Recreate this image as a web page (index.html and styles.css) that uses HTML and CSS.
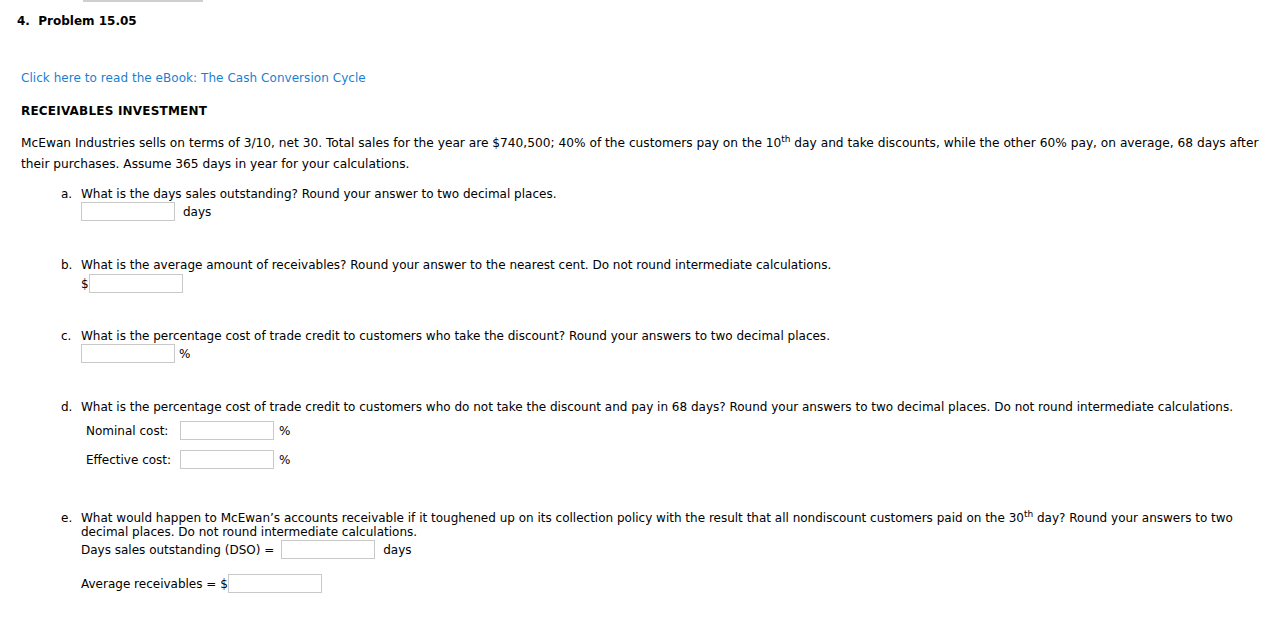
FILE: index.html
```html
<!DOCTYPE html>
<html>
<head>
<meta charset="utf-8">
<link rel="stylesheet" href="styles.css">
</head>
<body>
<div class="topline"></div>
<div class="title">4.&nbsp; Problem 15.05</div>
<div class="content">
  <a class="ebook" href="#">Click here to read the eBook: The Cash Conversion Cycle</a>
  <div class="heading">RECEIVABLES INVESTMENT</div>
  <p class="intro">McEwan Industries sells on terms of 3/10, net 30. Total sales for the year are $740,500; 40% of the customers pay on the 10<sup>th</sup> day and take discounts, while the other 60% pay, on average, 68 days after their purchases. Assume 365 days in year for your calculations.</p>

  <div class="q qa">
    <span class="ql">a.</span>
    <div class="qb">
      <div class="qt">What is the days sales outstanding? Round your answer to two decimal places.</div>
      <div class="ans ans-a"><span class="box"></span><span class="unit u-days">days</span></div>
    </div>
  </div>

  <div class="q qbq">
    <span class="ql">b.</span>
    <div class="qb">
      <div class="qt">What is the average amount of receivables? Round your answer to the nearest cent. Do not round intermediate calculations.</div>
      <div class="ans ans-b"><span class="pre">$</span><span class="box"></span></div>
    </div>
  </div>

  <div class="q qc">
    <span class="ql">c.</span>
    <div class="qb">
      <div class="qt">What is the percentage cost of trade credit to customers who take the discount? Round your answers to two decimal places.</div>
      <div class="ans ans-c"><span class="box"></span><span class="unit u-pct">%</span></div>
    </div>
  </div>

  <div class="q qd">
    <span class="ql">d.</span>
    <div class="qb">
      <div class="qt">What is the percentage cost of trade credit to customers who do not take the discount and pay in 68 days? Round your answers to two decimal places. Do not round intermediate calculations.</div>
      <div class="drow drow1"><span class="dlabel">Nominal cost:</span><span class="box"></span><span class="unit u-pct2">%</span></div>
      <div class="drow drow2"><span class="dlabel">Effective cost:</span><span class="box"></span><span class="unit u-pct2">%</span></div>
    </div>
  </div>

  <div class="q qe">
    <span class="ql">e.</span>
    <div class="qb">
      <div class="qt">What would happen to McEwan’s accounts receivable if it toughened up on its collection policy with the result that all nondiscount customers paid on the 30<sup>th</sup> day? Round your answers to two decimal places. Do not round intermediate calculations.</div>
      <div class="erow erow1"><span class="elabel">Days sales outstanding (DSO) =</span><span class="box"></span><span class="unit u-days2">days</span></div>
      <div class="erow erow2"><span class="elabel">Average receivables = $</span><span class="box"></span></div>
    </div>
  </div>
</div>
</body>
</html>
```
FILE: styles.css
```css
html, body {
  margin: 0;
  padding: 0;
  background: #ffffff;
}
body {
  font-family: "DejaVu Sans", Verdana, sans-serif;
  font-size: 12px;
  color: #000;
  width: 1286px;
  height: 636px;
  overflow: hidden;
}
.topline {
  margin-left: 83px;
  width: 120px;
  height: 2px;
  background: #cfcfcf;
}
.title {
  margin: 12px 0 0 17px;
  font-weight: bold;
  line-height: 14px;
  font-size: 12px;
}
.content {
  padding-left: 21px;
}
.ebook {
  display: block;
  margin-top: 43px;
  line-height: 14px;
  color: #1b7fd1;
  text-decoration: none;
  letter-spacing: 0.05px;
}
.heading {
  margin-top: 19px;
  font-weight: bold;
  line-height: 14px;
  letter-spacing: 0.2px;
}
.intro {
  margin: 15px 0 0 0;
  font-family: "DejaVu Sans", sans-serif;
  font-size: 12.2px;
  line-height: 21px;
  width: 1255px;
}
.intro sup, .qt sup {
  font-size: 9px;
  line-height: 0;
  vertical-align: 5px;
}
.q {
  display: grid;
  grid-template-columns: 20px 1fr;
  margin-left: 40px;
  line-height: 14px;
}
.qa { margin-top: 12px; }
.qbq { margin-top: 37px; }
.qc { margin-top: 36px; }
.qd { margin-top: 37px; }
.qe { margin-top: 42px; }
.ql { display: block; }
.qt { max-width: 1165px; }
.box {
  display: inline-block;
  box-sizing: border-box;
  width: 94px;
  height: 19px;
  border: 1px solid #c9c9c9;
  background: #fff;
  vertical-align: middle;
}
.ans, .drow, .erow {
  display: flex;
  align-items: center;
  height: 19px;
}
.ans-a { margin-top: 1px; }
.ans-b { margin-top: 2px; }
.ans-c { margin-top: 1px; }
.unit.u-days { margin-left: 8px; }
.unit.u-pct { margin-left: 4px; }
.pre { width: 8px; }
.drow { padding-left: 5px; }
.drow1 { margin-top: 7px; }
.drow2 { margin-top: 10px; }
.dlabel { width: 94px; }
.unit.u-pct2 { margin-left: 5px; }
.erow1 { margin-top: 1px; }
.erow2 { margin-top: 15px; }
.elabel { margin-right: 7px; }
.erow2 .elabel { margin-right: 0; }
.unit.u-days2 { margin-left: 8px; }
```
